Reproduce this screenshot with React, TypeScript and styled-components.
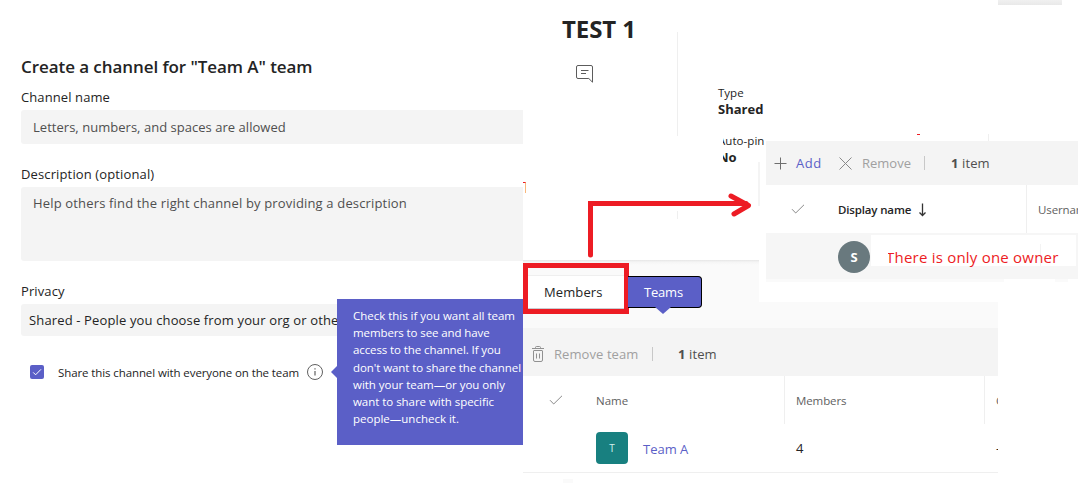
import { ReactNode, useState } from "react";
import styled, { createGlobalStyle } from "styled-components";

const BRAND = "#5b5fc7";
const RED = "#ed1c24";
const INK = "#242424";
const MUTED = "#616161";
const FILL = "#f4f4f4";
const LINE = "#efefef";

const GlobalStyle = createGlobalStyle`
  * {
    box-sizing: border-box;
  }
  body {
    margin: 0;
    background: #fff;
    color: ${INK};
    font-family: "Open Sans", "Noto Sans", sans-serif;
    overflow: hidden;
  }
`;

const Page = styled("div")`
  position: relative;
  display: grid;
  grid-template-columns: 523px 1fr;
  width: 1078px;
  height: 483px;
  overflow: hidden;
`;

const Text = styled("span")<{
  $size?: number;
  $weight?: number;
  $color?: string;
  $track?: number;
}>`
  display: block;
  font-size: ${(p) => p.$size ?? 13}px;
  font-weight: ${(p) => p.$weight ?? 400};
  color: ${(p) => p.$color ?? INK};
  letter-spacing: ${(p) => p.$track ?? 0}px;
  line-height: 20px;
  white-space: nowrap;
`;

/* Create channel form */

const Form = styled("form")`
  display: flex;
  flex-direction: column;
  height: 483px;
  padding: 57px 0 0 21px;
`;

const Field = styled("label")<{ $gap: number }>`
  display: block;
  margin-top: ${(p) => p.$gap}px;
`;

const Control = styled("div")<{ $height: number; $indent: number; $top: number }>`
  height: ${(p) => p.$height}px;
  margin-top: 3px;
  padding: ${(p) => p.$top}px 0 0 ${(p) => p.$indent}px;
  background: ${FILL};
  border-radius: 3px 0 0 3px;
`;

const ShareRow = styled("div")`
  position: relative;
  display: flex;
  align-items: center;
  height: 20px;
  margin-top: 26px;
  padding-left: 9px;

  & > ${Text} {
    margin-top: 2px;
  }
`;

const Checkbox = styled("button")`
  display: flex;
  width: 14px;
  height: 14px;
  margin-right: 14px;
  padding: 0;
  border: 0;
  border-radius: 2px;
  background: ${BRAND};
`;

const InfoSlot = styled("span")`
  display: flex;
  width: 18px;
  height: 18px;
  margin-left: auto;
  margin-right: 199px;
`;

const Tooltip = styled("div")`
  position: absolute;
  left: 316px;
  top: -63px;
  width: 186px;
  height: 146px;
  padding: 8px 0 0 16px;
  background: ${BRAND};

  &::before {
    content: "";
    position: absolute;
    left: -6px;
    top: 67px;
    border: solid transparent;
    border-width: 6px 6px 6px 0;
    border-right-color: ${BRAND};
  }

  ${Text} {
    line-height: 17.2px;
  }
`;

/* Channel details */

const Details = styled("section")`
  display: flex;
  height: 260px;
`;

const Heading = styled("div")`
  width: 154px;
  padding: 15px 0 0 39px;

  h1 {
    margin: 0;
    font-size: 24px;
    line-height: 28px;
    font-weight: 700;
    letter-spacing: -0.1px;
    white-space: nowrap;
  }

  svg {
    display: block;
    margin: 21px 0 0 13px;
  }
`;

const Divider = styled("div")`
  width: 1px;
  height: 104px;
  margin-top: 32px;
  background: ${LINE};

  &::after {
    content: "";
    display: block;
    height: 8px;
    margin-top: 179px;
    background: ${LINE};
  }
`;

const Facts = styled("div")`
  padding: 84px 0 0 40px;

  ${Text} {
    line-height: 17px;
  }
`;

const Clipped = styled("div")`
  margin: 14px 0 0 5px;
  overflow: hidden;

  ${Text} {
    margin-left: -5px;
  }
`;

/* Shared-with section */

const Shared = styled("section")`
  width: 475px;
`;

const Tabs = styled("div")`
  display: flex;
  height: 68px;
  padding-top: 3px;
  background: linear-gradient(#e6e6e6 0, #f5f5f5 2px, #fafafa 5px);
`;

const MembersTab = styled("div")`
  width: 106px;
  height: 51px;
  padding-top: 7px;
  border: 5px solid ${RED};
  background: #fafafa;

  ${Text} {
    height: 34px;
    padding-left: 16px;
    line-height: 33px;
    background: #fff;
    border-top: 1px solid ${LINE};
    border-bottom: 1px solid #c9ccd2;
  }
`;

const TeamsTab = styled("div")`
  position: relative;
  width: 74px;
  height: 32px;
  margin: 13px 0 0 -1px;
  padding-left: 16px;
  border: 1px solid #000;
  border-left: 0;
  border-radius: 0 4px 4px 0;
  background: ${BRAND};

  ${Text} {
    line-height: 31px;
  }

  &::after {
    content: "";
    position: absolute;
    left: 27px;
    top: 30px;
    border: solid transparent;
    border-width: 7px 8px 0;
    border-top-color: ${BRAND};
  }
`;

const Bar = styled("div")<{ $height: number; $top?: number }>`
  display: flex;
  align-items: center;
  height: ${(p) => p.$height}px;
  padding-top: ${(p) => p.$top ?? 0}px;
  background: ${FILL};
`;

const Slot = styled("span")<{ $width: number; $left?: number }>`
  display: flex;
  flex: none;
  align-items: center;
  width: ${(p) => p.$width}px;
  padding-left: ${(p) => p.$left ?? 0}px;
`;

const Separator = styled("i")`
  width: 1px;
  height: 14px;
  background: #c8c8c8;
`;

const Row = styled("div")<{ $columns: string; $ruled?: boolean }>`
  display: grid;
  grid-template-columns: ${(p) => p.$columns};
  height: 48px;
  border-bottom: ${(p) => (p.$ruled ? `1px solid ${LINE}` : "0")};
  box-sizing: content-box;
`;

const Cell = styled("div")<{ $left: number; $line?: boolean; $top?: number }>`
  display: flex;
  align-items: center;
  padding-left: ${(p) => p.$left}px;
  padding-top: ${(p) => p.$top ?? 0}px;
  border-left: ${(p) => (p.$line ? `1px solid ${LINE}` : "0")};
  overflow: hidden;
`;

const TeamTile = styled("span")`
  display: grid;
  place-items: center;
  width: 32px;
  height: 32px;
  margin-right: 15px;
  border-radius: 4px;
  background: #188080;
`;

const TeamLink = styled("span")`
  padding-top: 2px;
`;

/* Owners window lying over the details */

const Owners = styled("aside")`
  position: absolute;
  left: 759px;
  top: 134px;
  width: 319px;
  height: 168px;

  ${Bar} {
    margin-left: 7px;
  }
`;

const Fringe = styled("div")`
  display: flex;
  height: 7px;
  padding-left: 158px;

  &::before {
    content: "";
    width: 3px;
    height: 1px;
    margin-right: 68px;
    background: ${RED};
  }

  &::after {
    content: "";
    width: 1px;
    background: ${LINE};
  }
`;

const OwnersBody = styled("div")`
  height: 117px;
  padding-left: 7px;
  background: #fff;
`;

const EdgeLine = styled("i")`
  position: absolute;
  left: -1px;
  top: 28px;
  width: 2px;
  height: 44px;
  background: #f4f4f4;
`;

const OwnerRow = styled("div")`
  display: flex;
  height: 46px;
  background: #f6f6f6;
`;

const Avatar = styled("span")`
  display: grid;
  place-items: center;
  width: 32px;
  height: 32px;
  margin: 8px 1px 0 72px;
  border-radius: 50%;
  background: #69797e;
`;

const Note = styled("div")`
  position: relative;
  width: 205px;
  height: 31px;
  margin-top: 2px;
  padding-left: 17px;
  background: #fff;

  &::after {
    content: "";
    position: absolute;
    left: 169px;
    top: 9px;
    width: 1px;
    height: 22px;
    background: #f3f3f3;
  }
`;

const NoteClip = styled("div")`
  position: relative;
  z-index: 1;
  overflow: hidden;

  ${Text} {
    margin-left: -2px;
    line-height: 45px;
    height: 38px;
  }
`;

const Tail = styled("div")`
  display: flex;
  height: 3px;

  &::before {
    content: "";
    width: 238px;
    margin-right: 51px;
    background: #fafafa;
  }

  &::after {
    content: "";
    width: 13px;
    background: #fafafa;
  }
`;

const Arrow = styled("svg")`
  position: absolute;
  left: 580px;
  top: 185px;
`;

const TopShade = styled("i")`
  position: absolute;
  left: 998px;
  top: 0;
  width: 64px;
  height: 5px;
  background: linear-gradient(#f0f0f0, #e9e9e9);
`;

const RedCorner = styled("i")`
  position: absolute;
  left: 523px;
  top: 182px;
  width: 3px;
  height: 11px;
  border-top: 1px solid ${RED};
  border-right: 1px solid #f9b87c;
`;

const BottomSpeck = styled("i")`
  position: absolute;
  left: 563px;
  top: 479px;
  width: 10px;
  height: 4px;
  background: #fafafa;
`;

function Icon(props: { width: number; height: number; color?: string; children: ReactNode }) {
  const { width, height, color = "#8a8a8a", children } = props;
  return (
    <svg
      width={width}
      height={height}
      viewBox={`0 0 ${width} ${height}`}
      fill="none"
      stroke={color}
      strokeWidth={1}
    >
      {children}
    </svg>
  );
}

function CheckIcon() {
  return (
    <Icon width={14} height={10}>
      <path d="M1 5.2 4.7 9 13 .8" />
    </Icon>
  );
}

// Each line carries the letter spacing that gives it its set width.
const TOOLTIP_LINES: [string, number][] = [
  ["Check this if you want all team", -0.02],
  ["members to see and have", -0.1],
  ["access to the channel. If you", -0.1],
  ["don't want to share the channel", -0.07],
  ["with your team—or you only", -0.02],
  ["want to share with specific", -0.04],
  ["people—uncheck it.", 0],
];

function App() {
  const [checked, setChecked] = useState(true);

  return (
    <Page>
      <GlobalStyle />
      <Form>
        <Text $size={17} $weight={600} $track={-0.07}>
          Create a channel for "Team A" team
        </Text>
        <Field $gap={10}>
          <Text $track={0.1}>Channel name</Text>
          <Control $height={34} $indent={12} $top={7}>
            <Text $color="#4f4f4f" $track={0.03}>
              Letters, numbers, and spaces are allowed
            </Text>
          </Control>
        </Field>
        <Field $gap={20}>
          <Text $track={0.13}>Description (optional)</Text>
          <Control $height={74} $indent={12} $top={6}>
            <Text $color="#4f4f4f" $track={0.16}>
              Help others find the right channel by providing a description
            </Text>
          </Control>
        </Field>
        <Field $gap={20}>
          <Text $track={0.1}>Privacy</Text>
          <Control $height={32} $indent={8} $top={6}>
            <Text $track={0.14}>Shared - People you choose from your org or other</Text>
          </Control>
        </Field>
        <ShareRow>
          <Checkbox type="button" onClick={() => setChecked(!checked)}>
            {checked && (
              <Icon width={14} height={14} color="#fff">
                <path d="M3.2 7.4 5.6 9.8 11 4.3" />
              </Icon>
            )}
          </Checkbox>
          <Text $size={11.5} $track={-0.1}>
            Share this channel with everyone on the team
          </Text>
          <InfoSlot>
            <Icon width={18} height={18} color="#616161">
              <circle cx="9" cy="9" r="7.5" />
              <path d="M9 8v4.5M9 5.2v1.3" strokeWidth="1.2" />
            </Icon>
          </InfoSlot>
          <Tooltip>
            {TOOLTIP_LINES.map(([line, track]) => (
              <Text key={line} $size={11.5} $color="#fff" $track={track}>
                {line}
              </Text>
            ))}
          </Tooltip>
        </ShareRow>
      </Form>

      <main>
        <Details>
          <Heading>
            <h1>TEST 1</h1>
            <Icon width={19} height={20} color="#5c5c5c">
              <path d="M3 1.5h13a1.5 1.5 0 0 1 1.5 1.5v15.2l-3.7-3.7H3A1.5 1.5 0 0 1 1.5 13V3A1.5 1.5 0 0 1 3 1.5Z" />
              <path d="M6 6.5h7.5M6 9.5h5" />
            </Icon>
          </Heading>
          <Divider />
          <Facts>
            <Text $size={11.5}>Type</Text>
            <Text $size={13} $weight={700}>
              Shared
            </Text>
            <Clipped>
              <Text $size={11.5} $track={0.05}>
                Auto-pin
              </Text>
              <Text $size={13} $weight={700}>
                No
              </Text>
            </Clipped>
          </Facts>
        </Details>

        <Shared>
          <Tabs>
            <MembersTab>
              <Text $track={0.1}>Members</Text>
            </MembersTab>
            <TeamsTab>
              <Text $color="#fff" $track={-0.2}>
                Teams
              </Text>
            </TeamsTab>
          </Tabs>
          <Bar $height={48} $top={4}>
            <Slot $width={31} $left={9}>
              <Icon width={12} height={16} color="#919191">
                <path d="M0 2.5h12M3.5 2.5v-1a1 1 0 0 1 1-1h3a1 1 0 0 1 1 1v1M1.5 5v9a1.5 1.5 0 0 0 1.5 1.5h6a1.5 1.5 0 0 0 1.5-1.5V5M1.5 4.5h9M4.5 7.5v5M7.5 7.5v5" />
              </Icon>
            </Slot>
            <Slot $width={98}>
              <Text $color="#a0a0a0" $track={0.08}>
                Remove team
              </Text>
            </Slot>
            <Separator />
            <Slot $width={80} $left={25}>
              <Text $color="#4f4f4f" $track={0.1}>
                <b>1</b> item
              </Text>
            </Slot>
          </Bar>
          <Row $columns="73px 188px 200px 14px">
            <Cell $left={26}>
              <CheckIcon />
            </Cell>
            <Cell $left={0} $top={2}>
              <Text $size={11.5} $color={MUTED}>
                Name
              </Text>
            </Cell>
            <Cell $left={11} $top={2} $line>
              <Text $size={11.5} $color={MUTED} $track={-0.1}>
                Members
              </Text>
            </Cell>
            <Cell $left={11} $top={2} $line>
              <Text $size={11.5} $color={MUTED}>
                Guests
              </Text>
            </Cell>
          </Row>
          <Row $columns="73px 188px 200px 14px" $ruled>
            <Cell $left={0} />
            <Cell $left={0}>
              <TeamTile>
                <Text $size={10} $color="#d5eeee">
                  T
                </Text>
              </TeamTile>
              <TeamLink>
                <Text $color={BRAND}>Team A</Text>
              </TeamLink>
            </Cell>
            <Cell $left={12}>
              <Text>4</Text>
            </Cell>
            <Cell $left={12}>
              <Text>-</Text>
            </Cell>
          </Row>
        </Shared>
      </main>

      <Owners>
        <Fringe />
        <Bar $height={44}>
          <Slot $width={30} $left={8}>
            <Icon width={13} height={13} color="#6e6e6e">
              <path d="M6.5 .5v12M.5 6.5h12" />
            </Icon>
          </Slot>
          <Slot $width={43}>
            <Text $color={BRAND} $track={0.5}>
              Add
            </Text>
          </Slot>
          <Slot $width={23}>
            <Icon width={13} height={13}>
              <path d="M.5 .5l12 12M12.5 .5l-12 12" />
            </Icon>
          </Slot>
          <Slot $width={62}>
            <Text $color="#a0a0a0">Remove</Text>
          </Slot>
          <Separator />
          <Slot $width={80} $left={26}>
            <Text $color="#4f4f4f" $track={0.1}>
              <b>1</b> item
            </Text>
          </Slot>
        </Bar>
        <OwnersBody>
          <Row $columns="72px 188px 52px">
            <Cell $left={25}>
              <CheckIcon />
            </Cell>
            <Cell $left={0} $top={2}>
              <Slot $width={80}>
                <Text $size={11.5} $weight={600} $track={-0.15}>
                  Display name
                </Text>
              </Slot>
              <Icon width={9} height={14} color="#333">
                <path d="M4.5 .5v12M1.5 9.5l3 3 3-3" strokeWidth="1.3" />
              </Icon>
            </Cell>
            <Cell $left={11} $top={2} $line>
              <Text $size={11.5} $color={MUTED} $track={-0.1}>
                Username
              </Text>
            </Cell>
          </Row>
          <OwnerRow>
            <Avatar>
              <Text $weight={700} $color="#fff">
                S
              </Text>
            </Avatar>
            <Note>
              <NoteClip>
                <Text $size={15} $color={RED} $track={0.22}>
                  There is only one owner
                </Text>
              </NoteClip>
            </Note>
          </OwnerRow>
          <Tail />
        </OwnersBody>
        <EdgeLine />
      </Owners>

      <Arrow width="176" height="76" fill="none" stroke={RED} strokeWidth="5">
        <path d="M10.5 70V18.5H166" strokeLinecap="round" />
        <path d="M151 11 168.5 20.5 154 29" strokeLinecap="round" strokeLinejoin="round" />
      </Arrow>
      <TopShade />
      <RedCorner />
      <BottomSpeck />
    </Page>
  );
}

export default App;
